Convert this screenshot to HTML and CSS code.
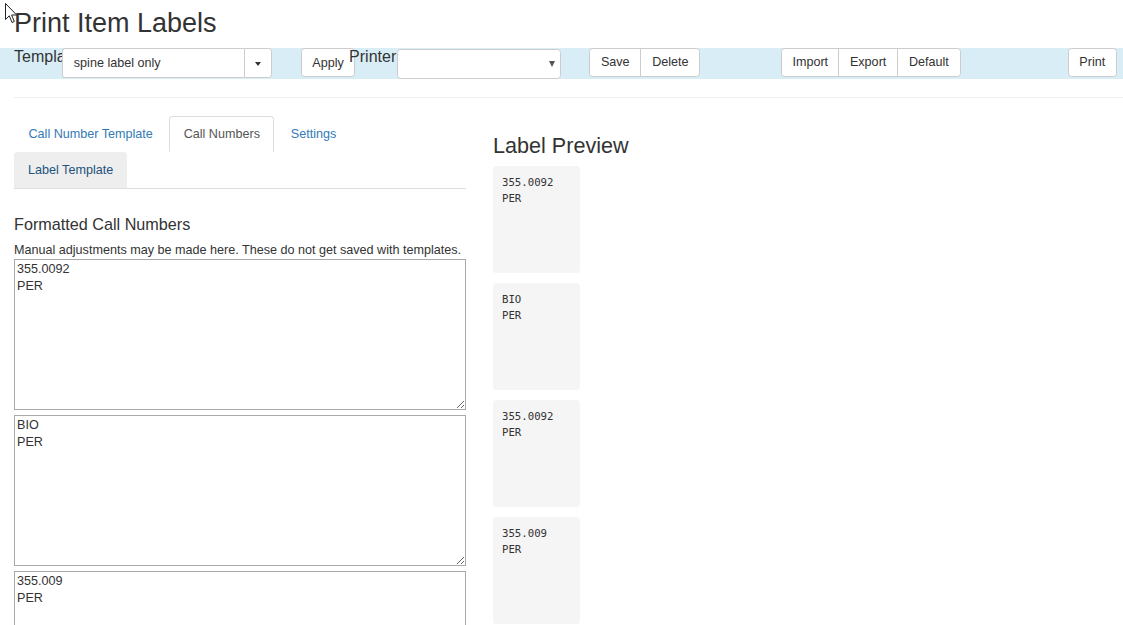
FILE: index.html
```html
<!DOCTYPE html>
<html>
<head>
<meta charset="utf-8">
<title>Print Item Labels</title>
<link rel="stylesheet" href="styles.css">
</head>
<body>
<svg class="cursor" width="13" height="21" viewBox="0 0 13 21"><path d="M0.5 0.5 L0.5 16.5 L4.3 12.8 L7 19.5 L9.3 18.5 L6.6 12 L11.7 12 Z" fill="#fff" stroke="#222" stroke-width="1"/></svg>
<h1 class="title">Print Item Labels</h1>
<div class="toolbar">
  <span class="tb-label">Template</span>
  <div class="combo">
    <div class="combo-input">spine label only</div>
    <div class="combo-btn"><span class="caret"></span></div>
  </div>
  <button class="btn btn-apply">Apply</button>
  <span class="tb-label tb-label-printer">Printer</span>
  <div class="select-printer"><span class="select-arrow"></span></div>
  <div class="btn-group group-save">
    <button class="btn">Save</button><button class="btn">Delete</button>
  </div>
  <div class="btn-group group-import">
    <button class="btn btn-import">Import</button><button class="btn">Export</button><button class="btn">Default</button>
  </div>
  <button class="btn btn-print">Print</button>
</div>
<div class="divider"></div>
<div class="main">
  <div class="left">
    <ul class="tabs">
      <li class="tab"><a>Call Number Template</a></li>
      <li class="tab active"><a>Call Numbers</a></li>
      <li class="tab"><a>Settings</a></li>
      <li class="tab hover"><a>Label Template</a></li>
    </ul>
    <div class="tab-content">
      <h4 class="section-title">Formatted Call Numbers</h4>
      <div class="help">Manual adjustments may be made here. These do not get saved with templates.</div>
      <textarea class="callnum">355.0092
PER</textarea>
      <textarea class="callnum">BIO
PER</textarea>
      <textarea class="callnum">355.009
PER</textarea>
    </div>
  </div>
  <div class="right">
    <h3 class="preview-title">Label Preview</h3>
    <pre class="label-card">355.0092
PER</pre>
    <pre class="label-card">BIO
PER</pre>
    <pre class="label-card">355.0092
PER</pre>
    <pre class="label-card">355.009
PER</pre>
  </div>
</div>
</body>
</html>
```
FILE: styles.css
```css
html, body {
  margin: 0;
  padding: 0;
}
body {
  font-family: "Liberation Sans", Arial, sans-serif;
  font-size: 12.6px;
  line-height: 1.42857;
  color: #333;
  background: #fff;
  overflow: hidden;
  height: 625px;
  position: relative;
}
.cursor {
  position: absolute;
  left: 5px;
  top: 3px;
  z-index: 10;
}
.title {
  margin: 0;
  padding: 9px 0 0 14px;
  font-size: 27px;
  font-weight: 400;
  line-height: 29.7px;
  height: 39px;
  box-sizing: border-box;
}
.toolbar {
  margin-top: 9px;
  background: #d9edf7;
  height: 31px;
  display: flex;
  align-items: flex-start;
  padding-left: 14px;
  padding-right: 6px;
}
.tb-label {
  font-size: 16px;
  line-height: 17px;
  width: 48px;
  white-space: nowrap;
  flex: none;
}
.tb-label-printer {
  margin-left: -6px;
}
.combo {
  display: flex;
  flex: none;
  height: 30px;
}
.combo-input {
  width: 182px;
  box-sizing: border-box;
  height: 30px;
  border: 1px solid #ccc;
  border-right: none;
  border-radius: 3.6px 0 0 3.6px;
  background: #fff;
  font-size: 12.6px;
  line-height: 28px;
  padding: 0 10.8px;
  color: #333;
}
.combo-btn {
  width: 28px;
  box-sizing: border-box;
  height: 30px;
  border: 1px solid #ccc;
  border-radius: 0 3.6px 3.6px 0;
  background: #fff;
  display: flex;
  align-items: center;
  justify-content: center;
}
.caret {
  width: 0;
  height: 0;
  border-top: 4px solid #333;
  border-left: 3.6px solid transparent;
  border-right: 3.6px solid transparent;
  margin-top: 2px;
}
.btn {
  font-family: "Liberation Sans", Arial, sans-serif;
  font-size: 12.6px;
  line-height: 18px;
  padding: 4px 10.8px 5px;
  height: 29px;
  box-sizing: border-box;
  background: #fff;
  border: 1px solid #ccc;
  border-radius: 3.6px;
  color: #333;
  margin: 0;
  flex: none;
}
.btn-apply {
  margin-left: 29px;
  padding: 5px 10.3px 4px;
}
.btn-import {
  padding-left: 10px;
  padding-right: 10px;
}
.select-printer {
  width: 164px;
  height: 30px;
  box-sizing: border-box;
  margin-top: 1px;
  border: 1px solid #ccc;
  border-radius: 3.6px;
  background: #fff;
  position: relative;
  flex: none;
}
.select-arrow {
  position: absolute;
  right: 5px;
  top: 11px;
  width: 0;
  height: 0;
  border-top: 6px solid #555;
  border-left: 3.5px solid transparent;
  border-right: 3.5px solid transparent;
}
.btn-group {
  display: flex;
  flex: none;
}
.btn-group .btn {
  border-radius: 0;
  margin-left: -1px;
}
.btn-group .btn:first-child {
  margin-left: 0;
  border-radius: 3.6px 0 0 3.6px;
}
.btn-group .btn:last-child {
  border-radius: 0 3.6px 3.6px 0;
}
.group-save {
  margin-left: 28px;
}
.group-import {
  margin-left: 81px;
}
.btn-print {
  margin-left: auto;
}
.divider {
  margin: 18px 0 0 14px;
  border-top: 1px solid #eee;
  height: 0;
}
.main {
  display: flex;
  padding: 18px 0 0 14px;
}
.left {
  width: 452px;
  flex: none;
}
.right {
  margin-left: 27px;
  flex: none;
}
.tabs {
  list-style: none;
  margin: 0;
  padding: 0;
  display: flex;
  flex-wrap: wrap;
  border-bottom: 1px solid #ddd;
}
.tab {
  margin-right: 1.8px;
}
.tab a {
  display: block;
  padding: 8px 13.5px 8px;
  line-height: 18px;
  color: #337ab7;
  border: 1px solid transparent;
  border-radius: 3.6px 3.6px 0 0;
}
.tab.active a {
  color: #555;
  background: #fff;
  border-color: #ddd #ddd transparent;
}
.tab.hover a {
  background: #eee;
  color: #23527c;
  border-width: 0;
  padding: 9px 13.5px 9px 14px;
}
.tab-content {
  padding-top: 27px;
}
.section-title {
  margin: 0;
  font-size: 16.2px;
  font-weight: 400;
  line-height: 17.8px;
}
.help {
  margin-top: 7px;
  line-height: 18px;
  margin-bottom: 0;
}
.callnum {
  display: block;
  width: 452px;
  height: 151px;
  box-sizing: border-box;
  border: 1px solid #a9a9a9;
  padding: 1px 2px;
  margin: 0 0 5px 0;
  font-family: "Liberation Sans", Arial, sans-serif;
  font-size: 12.6px;
  line-height: 17px;
  color: #333;
  resize: vertical;
}
.preview-title {
  margin: 18px 0 0 0;
  font-size: 21.6px;
  font-weight: 400;
  line-height: 24px;
}
.label-card {
  margin: 8px 0 10px 0;
  width: 87px;
  height: 107px;
  box-sizing: border-box;
  background: #f5f5f5;
  border-radius: 3.6px;
  padding: 8.5px 9px;
  font-family: "DejaVu Sans Mono", "Liberation Mono", monospace;
  font-size: 10.7px;
  line-height: 16.4px;
  color: #333;
}
.label-card + .label-card {
  margin-top: 0;
}
```
